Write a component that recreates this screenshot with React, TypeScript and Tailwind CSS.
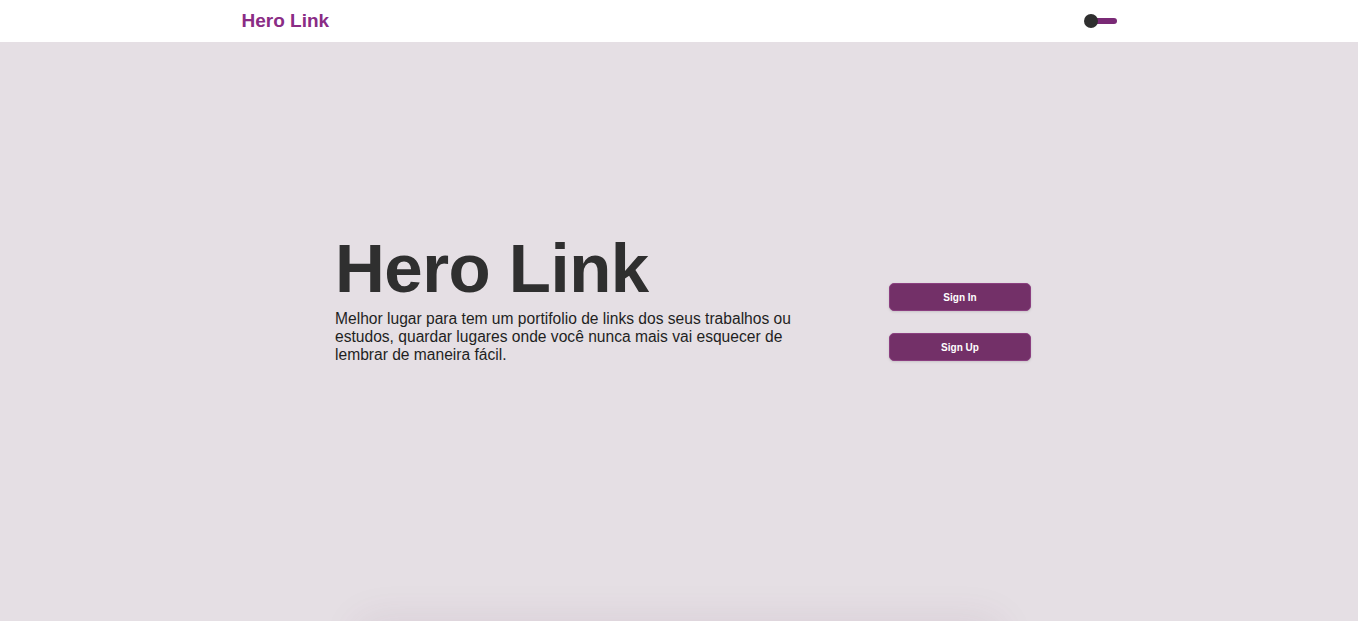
import React from 'react';

const ThemeToggle: React.FC = () => (
  <button className="relative flex h-[14px] w-[33px] items-center" aria-label="Alternar tema">
    <span className="absolute right-0 h-[6px] w-[26px] rounded-full bg-[#7a2a76]" />
    <span className="absolute left-0 h-[14px] w-[14px] rounded-full bg-[#2f2f2f]" />
  </button>
);

const App: React.FC = () => {
  return (
    <div className="min-h-screen w-full bg-[#e5dfe4] font-['Liberation_Sans',Arial,sans-serif]">
      <header className="h-[42px] w-full bg-white">
        <div className="mx-auto flex h-full w-[875px] items-center justify-between">
          <h1 className="text-[19px] font-bold text-[#8a2c85]">Hero Link</h1>
          <ThemeToggle />
        </div>
      </header>

      <main className="h-[579px] w-full">
        <div className="mx-auto flex w-[704px] items-start justify-between pl-[8px] pt-[190px]">
          <div className="w-[465px]">
            <h2 className="text-[69px] font-bold leading-[74px] tracking-[-0.5px] text-[#2f2f2f]">Hero Link</h2>
            <p className="mt-[4px] text-[15.6px] leading-[18px] text-[#1f1f1f]">
              Melhor lugar para tem um portifolio de links dos seus trabalhos ou estudos, quardar lugares onde você nunca mais vai esquecer de lembrar de maneira fácil.
            </p>
          </div>
          <div className="mt-[51px] flex w-[142px] flex-col gap-[22px]">
            <button className="h-[28px] w-full rounded-[5px] border border-[#8b3f80] bg-[#733068] text-[10px] font-bold text-white shadow-sm">
              Sign In
            </button>
            <button className="h-[28px] w-full rounded-[5px] border border-[#8b3f80] bg-[#733068] text-[10px] font-bold text-white shadow-sm">
              Sign Up
            </button>
          </div>
        </div>
      </main>

      <section className="mx-auto h-[200px] w-[640px] rounded-xl bg-[#e5dfe4] shadow-[0_0_40px_rgba(110,50,100,0.1)]" />
    </div>
  );
};

export default App;
